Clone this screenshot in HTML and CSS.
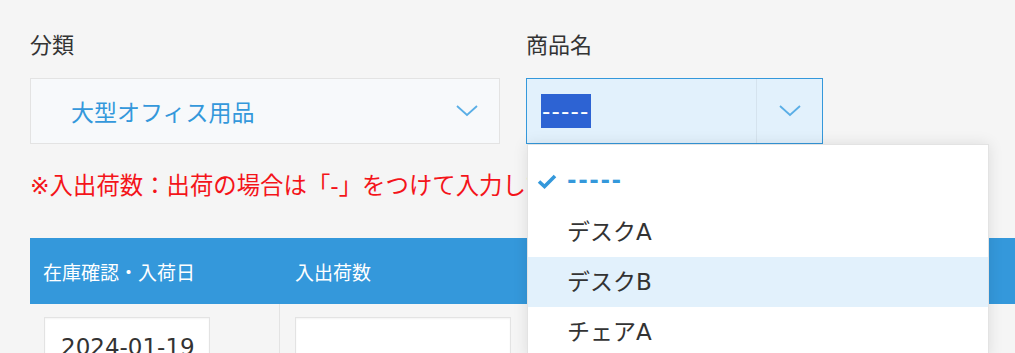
FILE: index.html
```html
<!DOCTYPE html>
<html lang="ja">
<head>
  <meta charset="utf-8">
  <title>在庫管理</title>
  <link rel="stylesheet" href="styles.css">
</head>
<body>
  <div class="form">
    <div class="fields">
      <div class="field field-category">
        <label class="field-label">分類</label>
        <div class="select">
          <span class="select-value">大型オフィス用品</span>
          <svg class="chevron" width="22" height="12" viewBox="0 0 22 12"><path d="M1 1 L11 10 L21 1" fill="none" stroke="#5aaee6" stroke-width="1.8"/></svg>
        </div>
      </div>

      <div class="field field-product">
        <label class="field-label">商品名</label>
        <div class="select select-open">
          <span class="select-value"><span class="selected-text">-----</span></span>
          <span class="select-btn">
            <svg class="chevron" width="22" height="12" viewBox="0 0 22 12"><path d="M1 1 L11 10 L21 1" fill="none" stroke="#5aaee6" stroke-width="1.8"/></svg>
          </span>
        </div>
        <ul class="menu">
          <li class="menu-item checked">
            <svg class="check" width="20" height="15" viewBox="0 0 20 15"><path d="M2 7.5 L7.5 12.5 L18 2" fill="none" stroke="#3498db" stroke-width="3.6"/></svg>
            <span class="dashes">-----</span>
          </li>
          <li class="menu-item">デスクA</li>
          <li class="menu-item hover">デスクB</li>
          <li class="menu-item">チェアA</li>
        </ul>
      </div>
    </div>

    <p class="notice">※入出荷数：出荷の場合は「-」をつけて入力してください</p>

    <div class="subtable">
      <div class="sub-head">
        <div class="cell col-date">在庫確認・入荷日</div>
        <div class="cell col-qty">入出荷数</div>
        <div class="cell col-rest">在庫数</div>
      </div>
      <div class="sub-row">
        <div class="cell col-date"><div class="input">2024-01-19</div></div>
        <div class="cell col-qty"><div class="input input-qty"></div></div>
        <div class="cell col-rest"><div class="input input-rest"></div></div>
      </div>
    </div>
  </div>
</body>
</html>
```

FILE: styles.css
```css
html, body {
  margin: 0;
  padding: 0;
  height: 100%;
  overflow: hidden;
}
body {
  background-color: #f5f5f5;
  font-family: "DejaVu Sans", "Noto Sans CJK JP", sans-serif;
  color: #333;
}
.form {
  padding: 34px 0 0 30px;
}
.fields {
  display: flex;
  gap: 26px;
}
.field {
  position: relative;
}
.field-label {
  display: block;
  font-size: 22px;
  line-height: 24px;
  height: 24px;
  margin-bottom: 20px;
}
.select {
  display: flex;
  align-items: center;
  height: 66px;
  box-sizing: border-box;
  border: 1px solid #e3e3e3;
  background-color: #f7f9fb;
}
.field-category .select {
  width: 470px;
  padding: 0 21px 0 40px;
  justify-content: space-between;
}
.select-value {
  font-size: 23px;
  color: #3498db;
}
.chevron {
  display: block;
}
.select-open {
  width: 297px;
  background-color: #e2f1fc;
  border-color: #3498db;
}
.select-open .select-value {
  flex: 1;
  padding-left: 14px;
}
.selected-text {
  display: inline-block;
  background-color: #2d63d3;
  color: #fff;
  line-height: 34px;
  padding: 0 1px;
  letter-spacing: 1.2px;
  font-size: 23px;
}
.select-btn {
  width: 65px;
  height: 100%;
  border-left: 1px solid #d5e3ee;
  display: flex;
  align-items: center;
  justify-content: center;
}
.menu {
  position: absolute;
  left: 1px;
  top: 110px;
  width: 460px;
  margin: 0;
  padding: 12px 0 0 0;
  list-style: none;
  background-color: #fff;
  border: 1px solid #e3e3e3;
  box-shadow: 0 0 14px rgba(0, 0, 0, 0.1);
  z-index: 10;
}
.menu-item {
  height: 50px;
  box-sizing: border-box;
  padding: 0 0 5px 39px;
  display: flex;
  align-items: center;
  font-size: 23px;
  color: #333;
  position: relative;
}
.menu-item.hover {
  background-color: #e2f1fc;
}
.check {
  position: absolute;
  left: 9px;
  top: 17px;
}
.dashes {
  color: #3498db;
  font-weight: bold;
  letter-spacing: 1.6px;
}
.notice {
  margin: 27px 0 0 0;
  font-size: 23.4px;
  line-height: 30px;
  color: #f4141a;
  white-space: nowrap;
}
.subtable {
  margin-top: 37px;
  width: 1100px;
}
.sub-head, .sub-row {
  display: flex;
}
.sub-head {
  background-color: #3498db;
  color: #fff;
  height: 66px;
  align-items: center;
}
.sub-head .cell {
  font-size: 19px;
  padding-left: 13px;
  box-sizing: border-box;
}
.sub-head .col-qty {
  padding-left: 15px;
}
.col-date {
  width: 250px;
}
.col-qty {
  width: 258px;
}
.col-rest {
  flex: 1;
}
.sub-row .cell {
  box-sizing: border-box;
  padding: 13px 0 0 14px;
  height: 60px;
  border-right: 1px solid #e3e3e3;
}
.sub-row .col-qty {
  padding-left: 15px;
}
.input {
  height: 60px;
  box-sizing: border-box;
  border: 1px solid #e3e3e3;
  background-color: #fff;
  box-shadow: inset 0 1px 2px rgba(0, 0, 0, 0.05);
  width: 166px;
  padding: 14px 0 0 16px;
  font-size: 23px;
  line-height: 30px;
}
.input-qty {
  width: 216px;
}
.input-rest {
  width: 200px;
}
```
